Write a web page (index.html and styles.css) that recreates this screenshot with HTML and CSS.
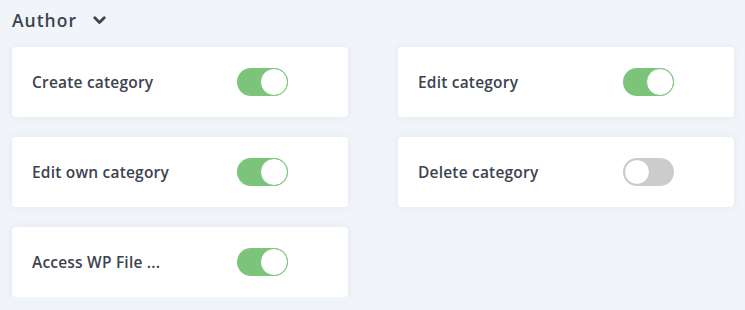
FILE: index.html
```html
<!DOCTYPE html>
<html lang="en">
<head>
    <meta charset="UTF-8">
    <meta name="viewport" content="width=device-width, initial-scale=1.0">
    <title>Role permissions</title>
    <link rel="stylesheet" href="styles.css">
</head>
<body>
    <div class="role-group">
        <h2 class="role-title">
            Author
            <svg class="chevron" width="13" height="9" viewBox="0 0 13 9"><path d="M1.8 1.8 L6.5 6.5 L11.2 1.8" fill="none" stroke="#3c4350" stroke-width="2.8" stroke-linecap="round" stroke-linejoin="round"/></svg>
        </h2>

        <div class="perm-grid">
            <div class="perm-card">
                <span class="perm-label">Create category</span>
                <span class="toggle on"><span class="knob"></span></span>
            </div>
            <div class="perm-card">
                <span class="perm-label">Edit category</span>
                <span class="toggle on"><span class="knob"></span></span>
            </div>
            <div class="perm-card">
                <span class="perm-label">Edit own category</span>
                <span class="toggle on"><span class="knob"></span></span>
            </div>
            <div class="perm-card">
                <span class="perm-label">Delete category</span>
                <span class="toggle"><span class="knob"></span></span>
            </div>
            <div class="perm-card">
                <span class="perm-label">Access WP File ...</span>
                <span class="toggle on"><span class="knob"></span></span>
            </div>
        </div>
    </div>
</body>
</html>
```

FILE: styles.css
```css
body {
    margin: 0;
    padding: 0 12px;
    background: #f1f4f9;
    color: #3c4350;
    font-family: 'Open Sans', 'Noto Sans', sans-serif;
}

.role-title {
    display: flex;
    align-items: center;
    gap: 16px;
    margin: 0;
    height: 40px;
    font-size: 17.5px;
    font-weight: 600;
    letter-spacing: 1px;
}

.chevron {
    margin-top: 0;
}

.perm-grid {
    display: grid;
    grid-template-columns: 336px 336px;
    column-gap: 50px;
    row-gap: 20px;
    padding-top: 7px;
}

.perm-card {
    display: flex;
    align-items: center;
    height: 70px;
    padding: 0 20px;
    background: #fff;
    border-radius: 4px;
    box-shadow: 0 0 6px rgba(200, 210, 230, 0.35);
}

.perm-label {
    width: 205px;
    font-size: 15.5px;
    font-weight: 600;
    letter-spacing: 0.2px;
    white-space: nowrap;
    overflow: hidden;
}

.toggle {
    position: relative;
    width: 51px;
    height: 28px;
    border-radius: 14px;
    background: #cccccc;
    box-sizing: border-box;
}

.toggle.on {
    background: #7bc47a;
}

.toggle .knob {
    position: absolute;
    top: 1px;
    left: 1px;
    width: 26px;
    height: 26px;
    box-sizing: border-box;
    border-radius: 50%;
    background: #fff;
    border: 1px solid #c4c4c4;
}

.toggle.on .knob {
    left: auto;
    right: 0;
    top: 0;
    width: 28px;
    height: 28px;
    border-color: #7bc47a;
}
```
